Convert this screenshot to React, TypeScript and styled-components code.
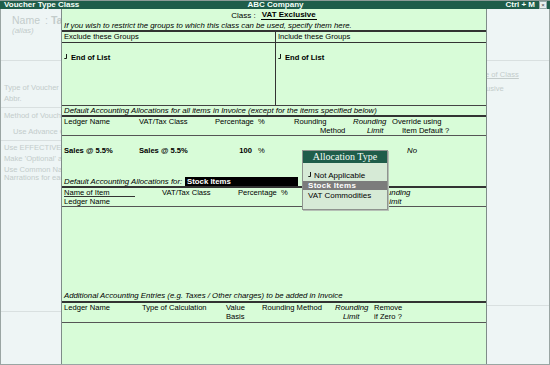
import React from "react";
import styled, { createGlobalStyle } from "styled-components";

const Global = createGlobalStyle`
  html, body { margin: 0; padding: 0; background: #eef5f5; }
  body { font-family: "Liberation Sans", Arial, sans-serif; }
`;

const Screen = styled.div`
  width: 550px;
  height: 365px;
  display: flex;
  flex-direction: column;
  overflow: hidden;
  background: #eef5f5;
  font-family: "Liberation Sans", Arial, sans-serif;
  color: #000;
`;

const TitleBar = styled.div`
  height: 8px;
  border-top: 1px solid #8d9a97;
  background: #1f5d4a;
  color: #f4fff8;
  display: grid;
  grid-template-columns: 1fr auto 1fr;
  align-items: center;
  padding: 0 3px 0 4px;
  font-size: 8px;
  font-weight: bold;
  line-height: 8px;
  white-space: nowrap;
`;

const TitleRight = styled.div`
  justify-self: end;
  display: flex;
  align-items: center;
  gap: 4px;
`;

const CloseBox = styled.span`
  width: 6px;
  height: 6px;
  background: #e8eeee;
  border: 1px solid #9aa;
  color: #444;
  font-size: 6px;
  line-height: 6px;
  text-align: center;
  font-weight: normal;
`;

const Body = styled.div`
  height: 355px;
  display: flex;
  border-bottom: 1px solid #9aa5a3;
`;

const Side = styled.div<{ $w: number; $edge: "left" | "right" }>`
  width: ${(p) => p.$w}px;
  flex-shrink: 0;
  box-sizing: border-box;
  ${(p) => (p.$edge === "left" ? "border-left" : "border-right")}: 1px solid #9aa5a3;
  overflow: hidden;
  display: flex;
  flex-direction: column;
  color: #c3cccb;
  font-size: 7.6px;
`;

const SideBlock = styled.div<{ $h?: number; $line?: boolean }>`
  ${(p) => (p.$h ? `height: ${p.$h}px;` : "flex: 1;")}
  flex-shrink: 0;
  border-bottom: ${(p) => (p.$line ? "1px solid #d9e0e0" : "none")};
  display: flex;
  flex-direction: column;
`;

const SideText = styled.div<{
  $mt?: number;
  $indent?: number;
  $lh?: number;
  $size?: number;
  $italic?: boolean;
  $under?: boolean;
}>`
  margin-top: ${(p) => p.$mt ?? 0}px;
  margin-left: ${(p) => p.$indent ?? 3}px;
  line-height: ${(p) => p.$lh ?? 11}px;
  height: ${(p) => p.$lh ?? 11}px;
  font-size: ${(p) => p.$size ?? 7.6}px;
  font-style: ${(p) => (p.$italic ? "italic" : "normal")};
  text-decoration: ${(p) => (p.$under ? "underline" : "none")};
  white-space: nowrap;
  flex-shrink: 0;
`;

const SideColon = styled.span`
  margin-left: 5px;
  margin-right: 3px;
`;

const FadedBold = styled.b`
  font-weight: bold;
`;

const Main = styled.div`
  width: 426px;
  flex-shrink: 0;
  box-sizing: border-box;
  border-left: 1px solid #7f8c89;
  border-right: 1px solid #7f8c89;
  background: #d8fcd8;
  display: flex;
  flex-direction: column;
  position: relative;
  font-size: 7.6px;
`;

const ClassLine = styled.div`
  height: 12px;
  display: flex;
  justify-content: center;
  align-items: center;
  gap: 5px;
  font-size: 8px;
  white-space: nowrap;
`;

const ClassValue = styled.span`
  font-weight: bold;
  border-bottom: 1px solid #000;
  line-height: 8px;
  padding: 0 1px;
`;

const Note = styled.div<{ $h: number }>`
  height: ${(p) => p.$h}px;
  line-height: ${(p) => p.$h}px;
  padding-left: 2px;
  font-style: italic;
  font-size: 7.8px;
  white-space: nowrap;
  flex-shrink: 0;
`;

const Rule = styled.div<{ $h: number; $c: string }>`
  height: ${(p) => p.$h}px;
  background: ${(p) => p.$c};
  flex-shrink: 0;
`;

const Groups = styled.div<{ $h: number; $line?: boolean }>`
  height: ${(p) => p.$h}px;
  display: grid;
  grid-template-columns: 214px 1fr;
  border-bottom: ${(p) => (p.$line ? "1px solid #333" : "none")};
  flex-shrink: 0;
`;

const GroupCell = styled.div<{ $divider?: boolean; $pt?: number }>`
  box-sizing: border-box;
  border-right: ${(p) => (p.$divider ? "1px solid #333" : "none")};
  padding: ${(p) => p.$pt ?? 0}px 0 0 2px;
  line-height: 9px;
  white-space: nowrap;
`;

const EndOfList = styled.div`
  display: flex;
  align-items: center;
  gap: 4px;
  font-weight: bold;
  line-height: 9px;
`;

const Row = styled.div<{ $h: number; $pt?: number; $line?: boolean }>`
  height: ${(p) => p.$h}px;
  box-sizing: border-box;
  padding: ${(p) => p.$pt ?? 0}px 0 0 2px;
  display: flex;
  border-bottom: ${(p) => (p.$line ? "1px solid #555" : "none")};
  flex-shrink: 0;
`;

const Col = styled.div<{ $w?: number }>`
  ${(p) => (p.$w ? `width: ${p.$w}px;` : "flex: 1;")}
  flex-shrink: 0;
  display: flex;
  flex-direction: column;
`;

const Ln = styled.span<{
  $indent?: number;
  $italic?: boolean;
  $bold?: boolean;
  $right?: number;
  $under?: number;
  $lh?: number;
}>`
  height: ${(p) => p.$lh ?? 9}px;
  line-height: ${(p) => p.$lh ?? 9}px;
  padding-left: ${(p) => p.$indent ?? 0}px;
  padding-right: ${(p) => p.$right ?? 0}px;
  text-align: ${(p) => (p.$right !== undefined ? "right" : "left")};
  font-style: ${(p) => (p.$italic ? "italic" : "normal")};
  font-size: ${(p) => (p.$italic ? 7.8 : 7.6)}px;
  font-weight: ${(p) => (p.$bold ? "bold" : "normal")};
  white-space: nowrap;
  ${(p) => (p.$under ? `width: ${p.$under}px; box-shadow: inset 0 -1px 0 #333;` : "")}
`;

const AllocFor = styled.div`
  height: 9px;
  display: grid;
  grid-template-columns: 123px 113px;
  align-items: center;
  flex-shrink: 0;
`;

const AllocLabel = styled.span`
  padding-left: 2px;
  font-style: italic;
  font-size: 7.8px;
  white-space: nowrap;
`;

const AllocValue = styled.span`
  height: 9px;
  line-height: 9px;
  background: #000;
  color: #fff;
  font-weight: bold;
  padding-left: 2px;
  font-size: 7.8px;
  white-space: nowrap;
`;

const Spacer = styled.div<{ $h?: number }>`
  ${(p) => (p.$h ? `height: ${p.$h}px;` : "flex: 1;")}
  flex-shrink: 0;
`;

const Popup = styled.div`
  position: absolute;
  left: 240px;
  top: 141px;
  width: 86px;
  height: 60px;
  box-sizing: border-box;
  border: 1px solid #8e938e;
  background: #d6ead6;
  display: flex;
  flex-direction: column;
  box-shadow: 1px 1px 0 #b6c0b6;
`;

const PopupTitle = styled.div`
  height: 12px;
  background: #1f5d4a;
  color: #f4fff8;
  font-family: "Liberation Serif", "Times New Roman", serif;
  font-size: 10px;
  line-height: 12px;
  text-align: center;
  white-space: nowrap;
`;

const PopupList = styled.div`
  padding-top: 8px;
  display: flex;
  flex-direction: column;
  gap: 1px;
`;

const PopupItem = styled.div<{ $active?: boolean }>`
  height: 9px;
  line-height: 9px;
  padding-left: 5px;
  display: flex;
  align-items: center;
  gap: 3px;
  font-size: 8px;
  white-space: nowrap;
  background: ${(p) => (p.$active ? "#7c7c7c" : "transparent")};
  color: ${(p) => (p.$active ? "#fff" : "#000")};
  font-weight: ${(p) => (p.$active ? "bold" : "normal")};
  letter-spacing: ${(p) => (p.$active ? "0.3px" : "0")};
`;

const EnterMark = () => (
  <svg width="3" height="5" viewBox="0 0 3 5" style={{ marginTop: -3 }}>
    <path d="M2.5 0 V4.5 H0.3" fill="none" stroke="#000" strokeWidth="0.9" />
  </svg>
);

export default function App() {
  return (
    <>
      <Global />
      <Screen>
        <TitleBar>
          <span>Voucher Type Class</span>
          <span>ABC Company</span>
          <TitleRight>
            <span>Ctrl + M</span>
            <CloseBox>×</CloseBox>
          </TitleRight>
        </TitleBar>
        <Body>
          <Side $w={61} $edge="left">
            <SideBlock $h={51} $line>
              <SideText $mt={5} $lh={12} $size={10.5} $indent={11}>
                Name<SideColon>:</SideColon>
                <FadedBold>Ta</FadedBold>
              </SideText>
              <SideText $lh={9} $size={8} $italic $indent={11}>
                (alias)
              </SideText>
            </SideBlock>
            <SideBlock $h={46} $line>
              <SideText $mt={21}>Type of Voucher</SideText>
              <SideText>Abbr.</SideText>
            </SideBlock>
            <SideBlock $h={32} $line>
              <SideText $mt={2}>Method of Voucher Numbering</SideText>
              <SideText $mt={5} $indent={12}>
                Use Advance Configuration
              </SideText>
            </SideBlock>
            <SideBlock $h={170} $line>
              <SideText $mt={1}>Use EFFECTIVE Dates</SideText>
              <SideText>Make 'Optional' as default</SideText>
              <SideText $lh={9} $mt={1}>
                Use Common Narration
              </SideText>
              <SideText $lh={8}>Narrations for each entry</SideText>
            </SideBlock>
            <SideBlock />
          </Side>

          <Main>
            <ClassLine>
              <span>Class :</span>
              <ClassValue>VAT Exclusive</ClassValue>
            </ClassLine>
            <Note $h={9}>
              If you wish to restrict the groups to which this class can be used, specify them here.
            </Note>
            <Rule $h={2} $c="#333" />
            <Groups $h={10} $line>
              <GroupCell $divider>Exclude these Groups</GroupCell>
              <GroupCell>Include these Groups</GroupCell>
            </Groups>
            <Groups $h={62}>
              <GroupCell $divider $pt={10}>
                <EndOfList>
                  <EnterMark />
                  End of List
                </EndOfList>
              </GroupCell>
              <GroupCell $pt={10}>
                <EndOfList>
                  <EnterMark />
                  End of List
                </EndOfList>
              </GroupCell>
            </Groups>
            <Rule $h={1} $c="#444" />
            <Note $h={9}>
              Default Accounting Allocations for all items in Invoice (except for the items specified below)
            </Note>
            <Rule $h={2} $c="#333" />
            <Row $h={19} $line>
              <Col $w={75}>
                <Ln>Ledger Name</Ln>
              </Col>
              <Col $w={76}>
                <Ln>VAT/Tax Class</Ln>
              </Col>
              <Col $w={43}>
                <Ln>Percentage</Ln>
              </Col>
              <Col $w={36}>
                <Ln>%</Ln>
              </Col>
              <Col $w={59}>
                <Ln>Rounding</Ln>
                <Ln $indent={26}>Method</Ln>
              </Col>
              <Col $w={39}>
                <Ln $italic>Rounding</Ln>
                <Ln $italic $indent={14}>
                  Limit
                </Ln>
              </Col>
              <Col>
                <Ln>Override using</Ln>
                <Ln $indent={10}>Item Default ?</Ln>
              </Col>
            </Row>
            <Row $h={41} $pt={10}>
              <Col $w={75}>
                <Ln $bold>Sales @ 5.5%</Ln>
              </Col>
              <Col $w={76}>
                <Ln $bold>Sales @ 5.5%</Ln>
              </Col>
              <Col $w={43}>
                <Ln $bold $right={6}>
                  100
                </Ln>
              </Col>
              <Col $w={36}>
                <Ln>%</Ln>
              </Col>
              <Col $w={59} />
              <Col $w={39} />
              <Col>
                <Ln $italic $indent={15}>
                  No
                </Ln>
              </Col>
            </Row>
            <AllocFor>
              <AllocLabel>Default Accounting Allocations for:</AllocLabel>
              <AllocValue>Stock Items</AllocValue>
            </AllocFor>
            <Rule $h={2} $c="#333" />
            <Row $h={19} $line>
              <Col $w={98}>
                <Ln $under={71}>Name of Item</Ln>
                <Ln>Ledger Name</Ln>
              </Col>
              <Col $w={76}>
                <Ln>VAT/Tax Class</Ln>
              </Col>
              <Col $w={43}>
                <Ln>Percentage</Ln>
              </Col>
              <Col $w={96}>
                <Ln>%</Ln>
              </Col>
              <Col>
                <Ln $italic>Rounding</Ln>
                <Ln $italic $indent={8}>
                  Limit
                </Ln>
              </Col>
            </Row>
            <Spacer $h={84} />
            <Note $h={10}>
              Additional Accounting Entries (e.g. Taxes / Other charges) to be added in Invoice
            </Note>
            <Rule $h={2} $c="#333" />
            <Row $h={20} $line>
              <Col $w={78}>
                <Ln>Ledger Name</Ln>
              </Col>
              <Col $w={84}>
                <Ln>Type of Calculation</Ln>
              </Col>
              <Col $w={36}>
                <Ln>Value</Ln>
                <Ln>Basis</Ln>
              </Col>
              <Col $w={73}>
                <Ln>Rounding Method</Ln>
              </Col>
              <Col $w={39}>
                <Ln $italic>Rounding</Ln>
                <Ln $italic $indent={8}>
                  Limit
                </Ln>
              </Col>
              <Col>
                <Ln>Remove</Ln>
                <Ln>if Zero ?</Ln>
              </Col>
            </Row>
            <Spacer />

            <Popup>
              <PopupTitle>Allocation Type</PopupTitle>
              <PopupList>
                <PopupItem>
                  <EnterMark />
                  Not Applicable
                </PopupItem>
                <PopupItem $active>Stock Items</PopupItem>
                <PopupItem>VAT Commodities</PopupItem>
              </PopupList>
            </Popup>
          </Main>

          <Side $w={63} $edge="right">
            <SideBlock $h={51} $line />
            <SideText $mt={8} $indent={-18} $lh={11} $under>
              Name of Class
            </SideText>
            <SideText $mt={3} $indent={-31} $lh={11}>
              VAT Exclusive
            </SideText>
            <SideBlock $h={211} $line />
            <SideBlock />
          </Side>
        </Body>
      </Screen>
    </>
  );
}
